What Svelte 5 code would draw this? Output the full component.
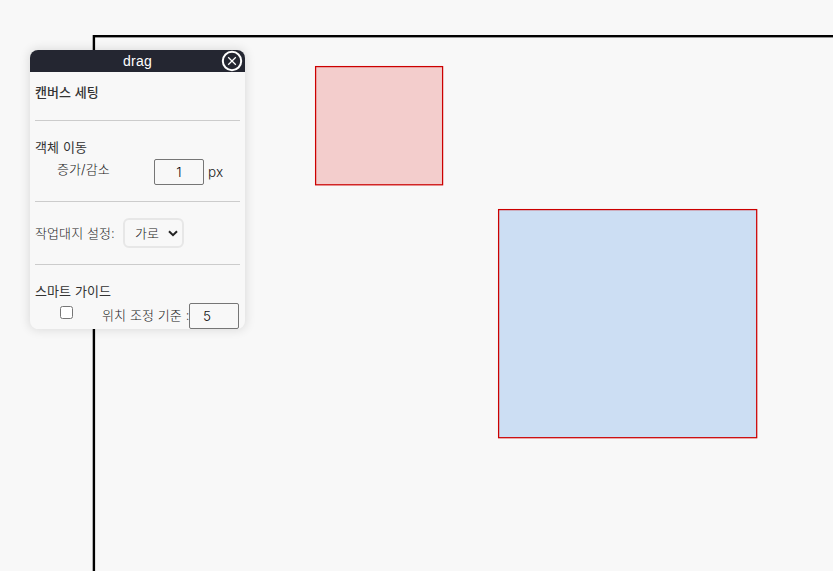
<script>
  let step = $state('1');
  let threshold = $state('5');
  let guide = $state(false);
  let open = $state(true);
</script>

<main>
  <svg class="canvas" width="833" height="571" viewBox="0 0 833 571" aria-label="canvas">
    <rect x="93.9" y="36.2" width="900" height="700" fill="none" stroke="#000" stroke-width="2.4" />
    <rect x="315.6" y="66.6" width="127" height="118.2" fill="#f3cdcc" stroke="#cc0000" stroke-width="1.25" />
    <rect x="498.6" y="209.6" width="258.1" height="228.1" fill="#ccdef3" stroke="#cc0000" stroke-width="1.25" />
  </svg>

  {#if open}
    <section class="panel">
      <header>
        <span>drag</span>
        <button class="close" aria-label="close" onclick={() => (open = false)}>
          <svg width="22" height="22" viewBox="0 0 22 22" fill="none" stroke="#fff">
            <circle cx="11" cy="11" r="9.2" stroke-width="2" />
            <path d="M7.2 7.2L14.8 14.8M14.8 7.2L7.2 14.8" stroke-width="1.25" />
          </svg>
        </button>
      </header>
      <div class="body">
        <div class="group title"><h1>캔버스 세팅</h1></div>
        <div class="group move">
          <h2>객체 이동</h2>
          <div class="row">
            <span class="name">증가/감소</span>
            <input class="num center" bind:value={step} />
            <span class="unit">px</span>
          </div>
        </div>
        <div class="group board">
          <span>작업대지 설정:</span>
          <div class="select">
            <span>가로</span>
            <svg width="10" height="7" viewBox="0 0 10 7" fill="none" stroke="#222" stroke-width="2">
              <path d="M1 1.2L5 5.2L9 1.2" />
            </svg>
          </div>
        </div>
        <div class="group guide">
          <h2>스마트 가이드</h2>
          <div class="row">
            <input type="checkbox" bind:checked={guide} />
            <span class="base">위치 조정 기준 :</span>
            <input class="num" bind:value={threshold} />
          </div>
        </div>
      </div>
    </section>
  {/if}
</main>

<style>
  :global(body) { margin: 0; background: #f8f8f8; overflow: hidden; }
  * { box-sizing: border-box; }
  main {
    position: relative;
    width: 833px;
    height: 571px;
    overflow: hidden;
    font: 300 13px/20px Inter, "Noto Sans CJK KR", sans-serif;
    letter-spacing: 0.1px;
    color: #222;
  }
  .canvas { display: block; }
  .panel {
    position: absolute;
    left: 30px;
    top: 50px;
    width: 215px;
    height: 279px;
    border-radius: 8px;
    background: #f8f8f8;
    box-shadow: 0 0 10px 2px rgba(0, 0, 0, 0.1);
    white-space: nowrap;
  }
  header {
    position: relative;
    height: 22px;
    border-radius: 8px 8px 0 0;
    background: #242631;
    color: #fff;
    text-align: center;
    font: 400 14px/22px "Liberation Sans", sans-serif;
    letter-spacing: 0.3px;
  }
  .close {
    position: absolute;
    right: 2px;
    top: 0;
    width: 22px;
    height: 22px;
    padding: 0;
    border: 0;
    background: none;
  }
  .close svg { display: block; }
  .body { padding: 0 5px; }
  .group { border-bottom: 1px solid #cccccc; }
  .group:last-child { border: 0; }
  h1, h2 { margin: 0; font-size: 13px; line-height: 20px; }
  h1 { font-weight: 500; color: #333; }
  h2 { font-weight: 400; color: #333; }
  .row { display: flex; align-items: flex-start; }
  .title { height: 49px; padding-top: 10px; }
  .move { height: 81px; padding-top: 16px; }
  .name { width: 97px; margin-left: 22px; line-height: 24px; }
  .unit { margin: 5px 0 0 4px; font-size: 13.5px; }
  .num {
    width: 50px;
    height: 26px;
    margin: 2px 0 0;
    padding: 0 0 0 13px;
    border: 1px solid #767676;
    border-radius: 2px;
    background: #f8f8f8;
    color: #111;
    font: 300 13.5px Inter, sans-serif;
  }
  .num.center { padding: 0; text-align: center; }
  .board { display: flex; align-items: center; height: 63px; }
  .select {
    display: flex;
    align-items: center;
    justify-content: space-between;
    width: 61px;
    height: 30px;
    margin-left: 8px;
    padding: 0 4px 0 10px;
    border: 2px solid #e7e7e7;
    border-radius: 6px;
  }
  .guide { padding-top: 16px; }
  .guide input[type="checkbox"] {
    width: 13px;
    height: 13px;
    margin: 5px 0 0 25px;
  }
  .base { width: 87px; margin: 4px 0 0 29px; }
</style>
